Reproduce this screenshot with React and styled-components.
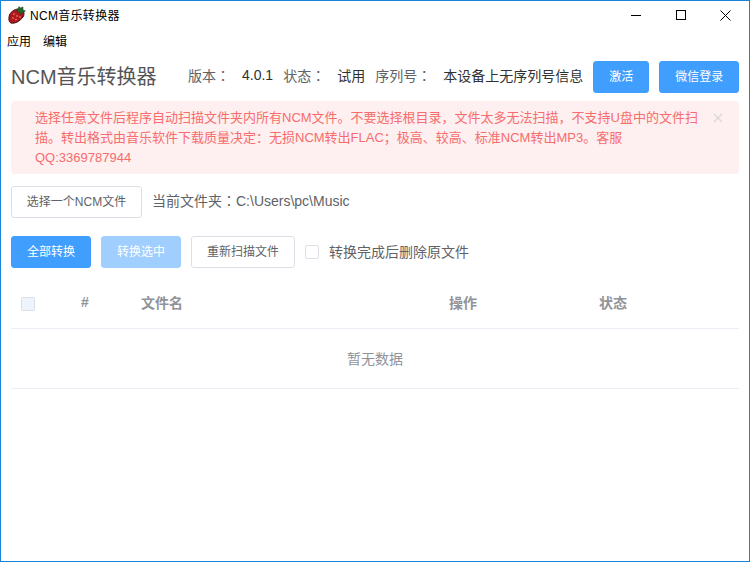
import React from 'react'
import styled, { createGlobalStyle } from 'styled-components'

const GlobalStyle = createGlobalStyle`
  html, body {
    margin: 0;
    padding: 0;
    background: #fff;
  }
  * {
    box-sizing: border-box;
  }
`

const AppWindow = styled.div`
  width: 750px;
  height: 562px;
  border: 1px solid #1883d7;
  background: #fff;
  overflow: hidden;
  font-family: "Liberation Sans", "Noto Sans CJK SC", sans-serif;
  color: #606266;
`

const TitleBar = styled.div`
  display: flex;
  align-items: center;
  height: 28px;
  padding: 0 1px 0 7px;
`

const AppTitle = styled.span`
  font-size: 12px;
  letter-spacing: 0.3px;
  color: #000;
  margin-left: 4px;
  padding-bottom: 2px;
  flex: 1;
`

const WinButton = styled.div`
  width: 45px;
  height: 28px;
  display: flex;
  align-items: center;
  justify-content: center;
`

const MenuBar = styled.div`
  display: flex;
  gap: 12px;
  height: 22px;
  align-items: center;
  padding-left: 6px;
  font-size: 12px;
  color: #000;
`

const Content = styled.div`
  padding: 0 10px;
`

const HeaderRow = styled.div`
  display: flex;
  align-items: center;
  height: 32px;
  margin-top: 10px;
`

const AppName = styled.div`
  font-size: 20px;
  color: #555;
  width: 177px;
  flex: none;
  padding-bottom: 3px;
`

const InfoLabel = styled.span`
  font-size: 14px;
  color: #606266;
  flex: none;
  white-space: nowrap;
  margin-right: ${p => p.$gap}px;
  padding-bottom: 4px;
`

const InfoValue = styled(InfoLabel)`
  color: #303133;
`

// the colon sits mid-height in the reference, the TC face draws it that way
const Colon = styled.span`
  font-family: "Noto Sans CJK TC", sans-serif;
`

const Button = styled.button`
  font-family: inherit;
  font-size: 12px;
  height: 32px;
  width: ${p => p.$width}px;
  margin-left: ${p => p.$left || 0}px;
  padding: 0 0 3px;
  border-radius: 3px;
  border: 1px solid ${p => (p.$primary ? '#409eff' : p.$disabled ? '#a0cfff' : '#dcdfe6')};
  background: ${p => (p.$primary ? '#409eff' : p.$disabled ? '#a0cfff' : '#fff')};
  color: ${p => (p.$primary || p.$disabled ? '#fff' : '#606266')};
  flex: none;
`

const Alert = styled.div`
  position: relative;
  margin-top: 8px;
  height: 73px;
  padding: 7px 40px 0 24px;
  background: #fef0f0;
  border-radius: 4px;
  font-size: 13px;
  line-height: 20px;
  color: #f76c6c;
`

const AlertClose = styled.div`
  position: absolute;
  top: 12px;
  right: 16px;
  width: 10px;
  height: 10px;
  display: flex;
`

const FolderRow = styled.div`
  display: flex;
  align-items: center;
  margin-top: 12px;
`

const FolderText = styled.span`
  font-size: 14px;
  color: #606266;
  margin-left: 10px;
  padding-bottom: 4px;
`

const ActionRow = styled.div`
  display: flex;
  align-items: center;
  margin-top: 18px;
`

const CheckBox = styled.span`
  display: inline-block;
  width: ${p => p.$size}px;
  height: ${p => p.$size}px;
  margin-left: ${p => p.$left || 0}px;
  border-radius: 2px;
  border: 1px solid #dcdfe6;
  background: ${p => p.$fill || '#fff'};
  flex: none;
`

const CheckLabel = styled.span`
  font-size: 14px;
  color: #606266;
  margin-left: 10px;
  padding-bottom: 3px;
`

const Table = styled.div`
  margin-top: 15px;
`

const TableHead = styled.div`
  display: grid;
  grid-template-columns: 70px 60px 308px 150px 1fr;
  align-items: center;
  height: 46px;
  padding-bottom: 3px;
  border-bottom: 1px solid #ebeef5;
  font-size: 14px;
  font-weight: 700;
  color: #909399;
`

const HeadCell = styled.div`
  padding-bottom: 4px;
`

const CheckCell = styled.div`
  display: flex;
  align-items: center;
  padding-left: 10px;
`

const EmptyRow = styled.div`
  height: 60px;
  display: flex;
  align-items: center;
  justify-content: center;
  padding-bottom: 1px;
  border-bottom: 1px solid #ebeef5;
  font-size: 14px;
  color: #909399;
`

const Strawberry = () => (
  <svg width="18" height="18" viewBox="0 0 18 18">
    <path d="M12 3 C16 4 17 8 15 11 C12 15 7 18 3 17 C0.5 16 0.5 12 1.5 9 C3 5 8 2.5 12 3 Z" fill="#b3151c" stroke="#3a1010" strokeWidth="1" />
    <path d="M10 3 L11 0.5 L12.5 2 L15 1 L15 4 L17.5 5 L14.5 6.5 L13 9 L11.5 6 L8.5 5.5 Z" fill="#1f6b2a" stroke="#123d18" strokeWidth="0.5" />
    <circle cx="6" cy="8" r="0.7" fill="#f3c0a0" />
    <circle cx="9" cy="10" r="0.7" fill="#f3c0a0" />
    <circle cx="5" cy="12" r="0.7" fill="#f3c0a0" />
    <circle cx="8" cy="13.5" r="0.7" fill="#f3c0a0" />
    <circle cx="12" cy="11" r="0.7" fill="#f3c0a0" />
  </svg>
)

const App = () => {
  return (
    <AppWindow>
      <GlobalStyle />
      <TitleBar>
        <Strawberry />
        <AppTitle>NCM音乐转换器</AppTitle>
        <WinButton>
          <svg width="10" height="10" viewBox="0 0 10 10"><path d="M0 5.5H10" stroke="#000" /></svg>
        </WinButton>
        <WinButton>
          <svg width="10" height="10" viewBox="0 0 10 10"><rect x="0.5" y="0.5" width="9" height="9" fill="none" stroke="#000" /></svg>
        </WinButton>
        <WinButton>
          <svg width="11" height="11" viewBox="0 0 11 11"><path d="M0.5 0.5L10.5 10.5M10.5 0.5L0.5 10.5" stroke="#000" /></svg>
        </WinButton>
      </TitleBar>
      <MenuBar>
        <span>应用</span>
        <span>编辑</span>
      </MenuBar>
      <Content>
        <HeaderRow>
          <AppName>NCM音乐转换器</AppName>
          <InfoLabel $gap={12}>版本<Colon>：</Colon></InfoLabel>
          <InfoValue $gap={10}>4.0.1</InfoValue>
          <InfoLabel $gap={12}>状态<Colon>：</Colon></InfoLabel>
          <InfoValue $gap={10}>试用</InfoValue>
          <InfoLabel $gap={12}>序列号<Colon>：</Colon></InfoLabel>
          <InfoValue $gap={0}>本设备上无序列号信息</InfoValue>
          <Button $primary $width={56} $left={10}>激活</Button>
          <Button $primary $width={80} $left={10}>微信登录</Button>
        </HeaderRow>
        <Alert>
          选择任意文件后程序自动扫描文件夹内所有NCM文件。不要选择根目录，文件太多无法扫描，不支持U盘中的文件扫描。转出格式由音乐软件下载质量决定：无损NCM转出FLAC；极高、较高、标准NCM转出MP3。客服QQ:3369787944
          <AlertClose>
            <svg width="10" height="10" viewBox="0 0 10 10"><path d="M1 1L9 9M9 1L1 9" stroke="#d8d8da" strokeWidth="1.2" /></svg>
          </AlertClose>
        </Alert>
        <FolderRow>
          <Button $width={131}>选择一个NCM文件</Button>
          <FolderText>当前文件夹<Colon>：</Colon>C:\Users\pc\Music</FolderText>
        </FolderRow>
        <ActionRow>
          <Button $primary $width={80}>全部转换</Button>
          <Button $disabled $width={80} $left={10}>转换选中</Button>
          <Button $width={104} $left={10}>重新扫描文件</Button>
          <CheckBox $size={14} $left={10} />
          <CheckLabel>转换完成后删除原文件</CheckLabel>
        </ActionRow>
        <Table>
          <TableHead>
            <CheckCell><CheckBox $size={14} $fill="#edf4fc" /></CheckCell>
            <HeadCell>#</HeadCell>
            <HeadCell>文件名</HeadCell>
            <HeadCell>操作</HeadCell>
            <HeadCell>状态</HeadCell>
          </TableHead>
          <EmptyRow>暂无数据</EmptyRow>
        </Table>
      </Content>
    </AppWindow>
  )
}

export default App
